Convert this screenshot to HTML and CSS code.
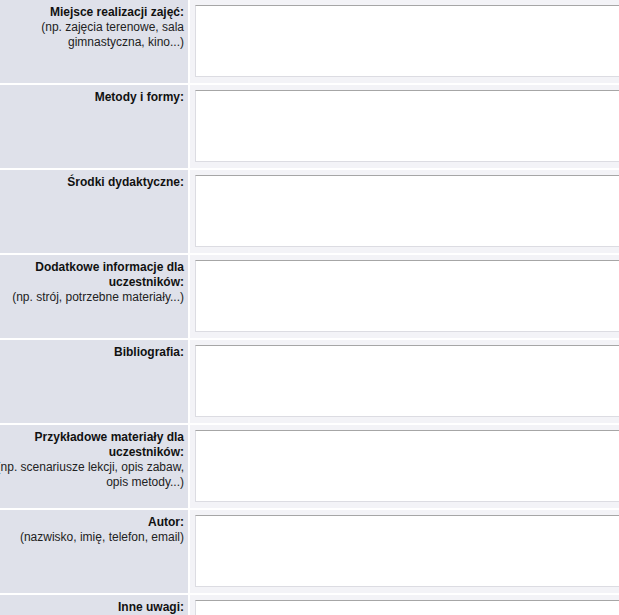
FILE: index.html
```html
<!DOCTYPE html>
<html lang="pl">
<head>
<meta charset="utf-8">
<title>Formularz</title>
<link rel="stylesheet" href="styles.css">
</head>
<body>
<div class="form">
  <div class="label"><b>Miejsce realizacji zajęć:</b><br>(np. zajęcia terenowe, sala gimnastyczna, kino...)</div>
  <div class="field"><textarea></textarea></div>

  <div class="label"><b>Metody i formy:</b></div>
  <div class="field"><textarea></textarea></div>

  <div class="label"><b>Środki dydaktyczne:</b></div>
  <div class="field"><textarea></textarea></div>

  <div class="label"><b>Dodatkowe informacje dla uczestników:</b><br>(np. strój, potrzebne materiały...)</div>
  <div class="field"><textarea></textarea></div>

  <div class="label"><b>Bibliografia:</b></div>
  <div class="field"><textarea></textarea></div>

  <div class="label"><b>Przykładowe materiały dla uczestników:</b><br>(np. scenariusze lekcji, opis zabaw, opis metody...)</div>
  <div class="field"><textarea></textarea></div>

  <div class="label"><b>Autor:</b><br>(nazwisko, imię, telefon, email)</div>
  <div class="field"><textarea></textarea></div>

  <div class="label"><b>Inne uwagi:</b></div>
  <div class="field"><textarea></textarea></div>
</div>
</body>
</html>
```
FILE: styles.css
```css
html, body {
  margin: 0;
  padding: 0;
  background: #ffffff;
  overflow: hidden;
}

.form {
  display: grid;
  grid-template-columns: 200px 600px;
  grid-auto-rows: 83px;
  gap: 2px;
  margin-left: -12px;
  font-family: "Liberation Sans", Arial, sans-serif;
  font-size: 12px;
  line-height: 15px;
}

.label {
  background: #dfe1ea;
  color: #222222;
  text-align: right;
  padding: 5px 4px 0 0;
}

.label b {
  color: #111111;
  font-weight: bold;
}

.field {
  background: #f3f3f7;
  padding: 5px 5px 6px 5px;
}

.field textarea {
  display: block;
  box-sizing: border-box;
  width: 100%;
  height: 72px;
  margin: 0;
  padding: 2px;
  background: #ffffff;
  border: 1px solid #dcdce2;
  border-top-color: #a6a6a6;
  resize: none;
  outline: none;
  font-family: "Liberation Sans", Arial, sans-serif;
  font-size: 12px;
}
```
